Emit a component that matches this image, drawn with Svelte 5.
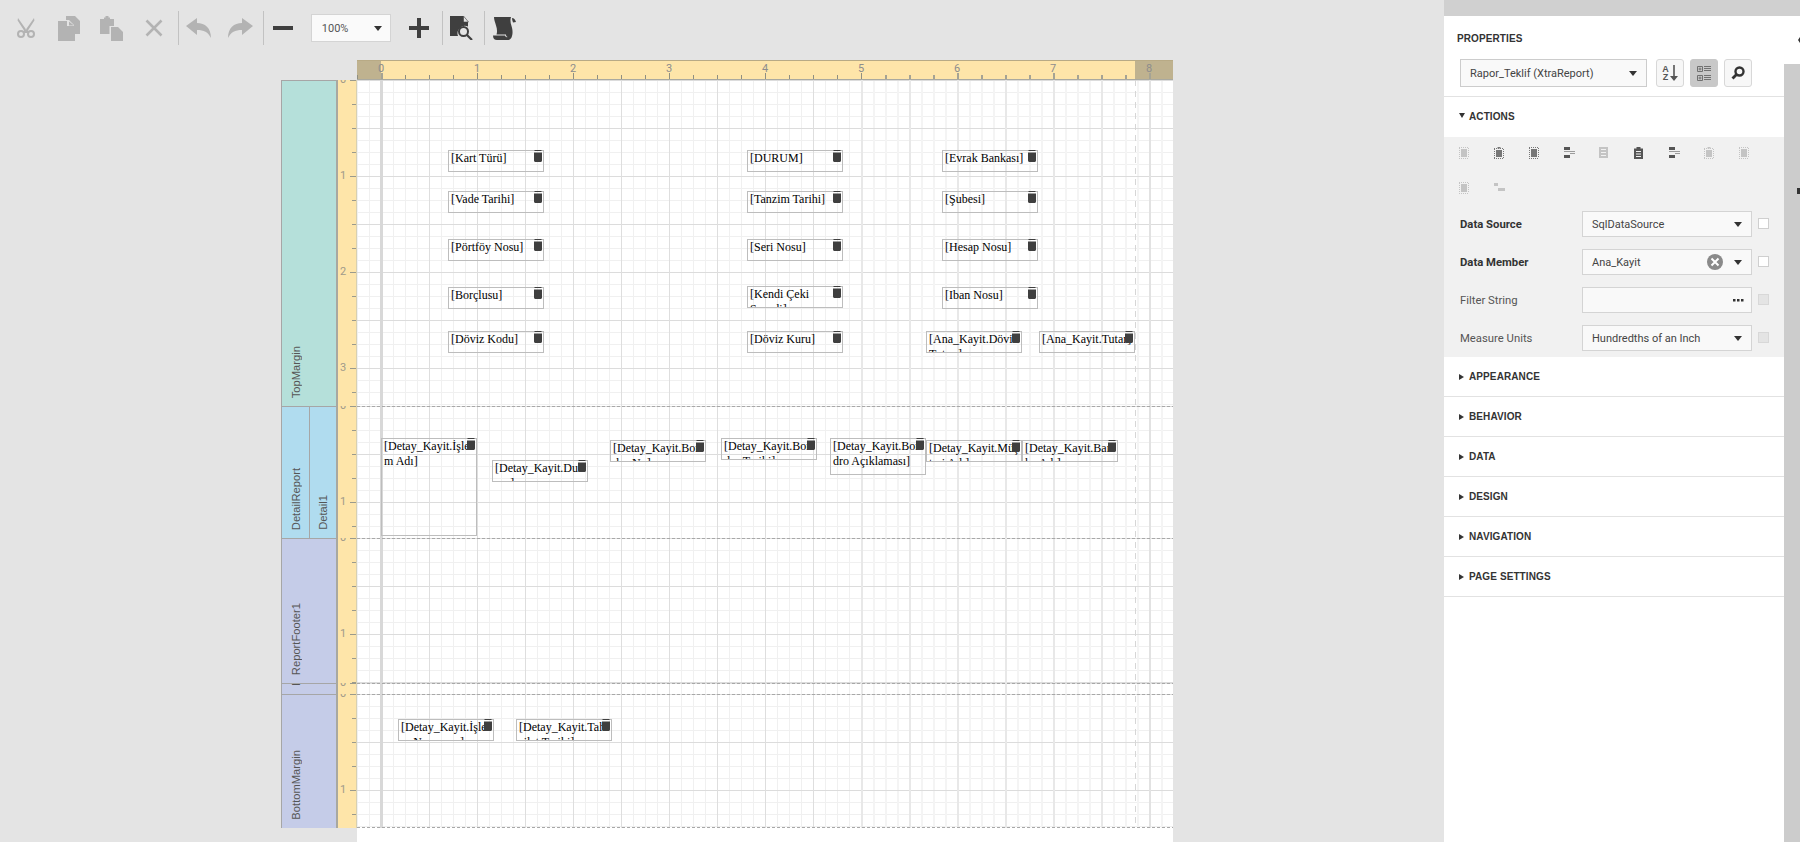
<script lang="ts">
  const bands = [
    { key: 'top', h: 326, color: 'teal', labels: ['TopMargin'] },
    { key: 'detail', h: 132, color: 'blue', labels: ['DetailReport', 'Detail1'] },
    { key: 'footer', h: 145, color: 'lilac', labels: ['ReportFooter1'] },
    { key: 'sliver', h: 11, color: 'lilac', labels: ['I'] },
    { key: 'bottom', h: 134, color: 'lilac', labels: ['BottomMargin'] },
  ];

  // x is relative to the page canvas, y to the band the control sits in
  const controls: Record<string, { x: number; y: number; h?: number; t: string }[]> = {
    top: [
      { x: 91, y: 70, t: '[Kart Türü]' },
      { x: 91, y: 111, t: '[Vade Tarihi]' },
      { x: 91, y: 159, t: '[Pörtföy Nosu]' },
      { x: 91, y: 207, t: '[Borçlusu]' },
      { x: 91, y: 251, t: '[Döviz Kodu]' },
      { x: 390, y: 70, t: '[DURUM]' },
      { x: 390, y: 111, t: '[Tanzim Tarihi]' },
      { x: 390, y: 159, t: '[Seri Nosu]' },
      { x: 390, y: 206, t: '[Kendi Çeki Senedi]' },
      { x: 390, y: 251, t: '[Döviz Kuru]' },
      { x: 585, y: 70, t: '[Evrak Bankası]' },
      { x: 585, y: 111, t: '[Şubesi]' },
      { x: 585, y: 159, t: '[Hesap Nosu]' },
      { x: 585, y: 207, t: '[Iban Nosu]' },
      { x: 569, y: 251, t: '[Ana_Kayit.Döviz Tutarı]' },
      { x: 682, y: 251, t: '[Ana_Kayit.Tutar]' },
    ],
    detail: [
      { x: 24, y: 32, h: 98, t: '[Detay_Kayit.İşlem Adı]' },
      { x: 135, y: 54, t: '[Detay_Kayit.Durum]' },
      { x: 253, y: 34, t: '[Detay_Kayit.Bordro No]' },
      { x: 364, y: 32, t: '[Detay_Kayit.Bordro Tarihi]' },
      { x: 473, y: 32, h: 37, t: '[Detay_Kayit.Bordro Açıklaması]' },
      { x: 569, y: 34, t: '[Detay_Kayit.Müşteri Adı]' },
      { x: 665, y: 34, t: '[Detay_Kayit.Banka Adı]' },
    ],
    footer: [],
    sliver: [],
    bottom: [
      { x: 41, y: 25, t: '[Detay_Kayit.İşlem Numarası]' },
      { x: 159, y: 25, t: '[Detay_Kayit.Tahsilat Tarihi]' },
    ],
  };

  const inches = [0, 1, 2, 3, 4, 5, 6, 7, 8];
  const quarterTicks = Array.from({ length: 34 }, (_, i) => i * 24);

  function bandTicks(h: number) {
    const out: number[] = [];
    for (let y = 0; y < h; y += 24) out.push(y);
    return out;
  }

  const actionIcons = [
    { k: 'frame', c: 'off' }, { k: 'clip', c: 'mid' }, { k: 'frame', c: 'mid' },
    { k: 'align', c: 'on' }, { k: 'list', c: 'off' }, { k: 'board', c: 'on' },
    { k: 'align', c: 'on' }, { k: 'clip', c: 'off' }, { k: 'frame', c: 'off' },
    { k: 'frame', c: 'off' }, { k: 'alignb', c: 'off' },
  ];

  const sections = ['APPEARANCE', 'BEHAVIOR', 'DATA', 'DESIGN', 'NAVIGATION', 'PAGE SETTINGS'];
</script>

{#snippet caret()}
  <svg class="caret" width="8" height="5" viewBox="0 0 8 5"><path d="M0 0h8L4 5z" /></svg>
{/snippet}

<div class="page">
  <div class="main">
    <div class="toolbar">
      <button class="tb off" title="Cut">
        <svg width="22" height="22" viewBox="0 0 22 22">
          <path d="M3 1l8.800 12.400-1.600 1.800L2.600 3.600zM19 1l-8.800 12.400 1.600 1.800 7.600-11.600z" />
          <path d="M8 14.500l2-1.500 2 0 2 1.500-1 1.500h-4z" />
          <circle cx="6" cy="17" r="3" fill="none" stroke="#b3b3b3" stroke-width="2" />
          <circle cx="16" cy="17" r="3" fill="none" stroke="#b3b3b3" stroke-width="2" />
        </svg>
      </button>
      <button class="tb off" title="Copy">
        <svg width="23" height="25" viewBox="0 0 23 25">
          <path d="M8 0h9l5 5v13h-6V9l-5-5H8z" />
          <path d="M0 5h9v5h5 3v15H0zM11 5.500l5 4h-5z" />
        </svg>
      </button>
      <button class="tb off" title="Paste">
        <svg width="23" height="25" viewBox="0 0 23 25">
          <path d="M0 3h4V1.500h1.500V0h3v1.500H10V3h4v7h-4.500v8H0z" />
          <path d="M11 11h7l5 5v9H11zM18.500 11.500l4 4h-4z" />
        </svg>
      </button>
      <button class="tb off" title="Delete">
        <svg width="18" height="18" viewBox="0 0 18 18"><path d="M1.500 1.500l15 15M16.500 1.500l-15 15" fill="none" stroke="#b3b3b3" stroke-width="2.600" /></svg>
      </button>
      <span class="sep first"></span>
      <button class="tb off" title="Undo">
        <svg width="25" height="20" viewBox="0 0 25 20"><path d="M0 8L11 0v5c8 0 14 5 14 15-3-6-7-8-14-8v5z" /></svg>
      </button>
      <button class="tb off" title="Redo">
        <svg width="25" height="20" viewBox="0 0 25 20"><path d="M25 8L14 0v5C6 5 0 10 0 20c3-6 7-8 14-8v5z" /></svg>
      </button>
      <span class="sep"></span>
      <button class="tb" title="Zoom out">
        <svg width="20" height="4" viewBox="0 0 20 4"><path d="M0 0h20v4H0z" /></svg>
      </button>
      <div class="zoom"><span>100%</span>{@render caret()}</div>
      <button class="tb plus" title="Zoom in">
        <svg width="20" height="20" viewBox="0 0 20 20"><path d="M8 0h4v8h8v4h-8v8H8v-8H0V8h8z" /></svg>
      </button>
      <span class="sep"></span>
      <button class="tb" title="Preview">
        <svg width="24" height="24" viewBox="0 0 24 24">
          <path d="M0 0h13l5 6v4.500a7.500 7.500 0 0 0-10 9.500H0z" />
          <path d="M13.500 0l5 6h-5z" fill="#e4e4e4" stroke="#3f3f3f" stroke-width=".6" />
          <circle cx="13.500" cy="15.500" r="4.500" fill="none" stroke="#3f3f3f" stroke-width="2" />
          <path d="M17 19l5 5" stroke="#3f3f3f" stroke-width="2.200" fill="none" />
        </svg>
      </button>
      <span class="sep"></span>
      <button class="tb" title="Scripts">
        <svg width="23" height="23" viewBox="0 0 23 23">
          <path d="M1 0h17c-1 3-.500 6 .500 9 1 3 1.500 7 .500 10-.500 2-1.500 3.500-3.500 4H4c-2.500 0-4-1.500-4-4.500h12c.500 1.500 1.500 2 2.500 1.500-1-.500-1.500-1-1.500-2.500H3.500c1-3 .500-6-.500-9C2 5 1 3 1 0z" />
          <path d="M19 1c2 0 3 1.500 4 4l-3 .500c-.500-1.500-1-3-1-4.500z" />
        </svg>
      </button>
    </div>

    <div class="surface">
      <div class="hruler">
        <div class="margin left"></div>
        <div class="margin right"></div>
        {#each quarterTicks as x, i}
          <i class="htick" class:inch={i % 4 === 1} class:wide={x > 504 || i === 1} style:left="{x}px"></i>
        {/each}
        {#each inches as n}
          <span class="hnum" style:left="{24 + n * 96}px">{n}</span>
        {/each}
      </div>

      {#each bands as band}
        <div class="band" style:height="{band.h}px">
          <div class="labels {band.color}">
            {#each band.labels as label}
              <div class="label"><span>{label}</span></div>
            {/each}
          </div>
          <div class="vruler">
            {#each bandTicks(band.h) as y, i}
              <i class="vtick" class:inch={i % 4 === 0} style:top="{y}px"></i>
              {#if i % 4 === 0}<span class="vnum" style:top="{y}px">{i / 4}</span>{/if}
            {/each}
          </div>
          <div class="grid" class:dashed={band.key !== 'top'} class:last={band.key === 'bottom'}>
            {#each controls[band.key] as c}
              <div class="ctl" style:left="{c.x}px" style:top="{c.y}px" style:height={c.h ? `${c.h}px` : null}>
                <div class="ctl-text">{c.t}</div>
                <svg class="db" width="8" height="12" viewBox="0 0 8 12">
                  <path d="M1 0h6l1 1H0z" />
                  <path d="M0 2.500h8V10.500c0 1-1 1.500-2 1.500H2c-1 0-2-.5-2-1.500z" />
                </svg>
              </div>
            {/each}
          </div>
        </div>
      {/each}
      <div class="page-edge"></div>
      <div class="paper-end"></div>
    </div>
  </div>

  <aside class="panel">
    <div class="panel-top"></div>
    <div class="panel-body">
      <div class="props">
        <div class="head">
          <div class="title">PROPERTIES</div>
          <div class="picker">
            <div class="pick"><span>Rapor_Teklif (XtraReport)</span>{@render caret()}</div>
            <button class="ib">
              <span class="az"><b>A</b><b>Z</b></span>
              <svg width="8" height="16" viewBox="0 0 8 16"><path d="M3.200 0h1.600v11H8l-4 5-4-5h3.200z" /></svg>
            </button>
            <button class="ib active">
              <svg width="14" height="15" viewBox="0 0 14 15" fill="none" stroke="#707070">
                <path d="M.5.500h5v5h-5zM.5 9.500h5v5h-5zM1.500 3h3M3 1.500v3M1.500 12h3M3 10.500v3M7 .5h7M7 2.500h7M7 4.500h7M7 9.500h7M7 11.500h7M7 13.500h7" />
              </svg>
            </button>
            <button class="ib">
              <svg width="14" height="14" viewBox="0 0 14 14">
                <circle cx="8.500" cy="5.500" r="4" fill="none" stroke="#333" stroke-width="2.400" />
                <path d="M5.500 8.500L1.500 12.500" stroke="#333" stroke-width="2.800" />
              </svg>
            </button>
          </div>
        </div>

        <div class="sec open"><span class="tri down"></span>ACTIONS</div>
        <div class="actions">
          <div class="icons">
            {#each actionIcons as ic}
              <div class="aicon {ic.c}">
                {#if ic.k === 'frame'}
                  <svg width="10" height="12" viewBox="0 0 10 12"><path d="M2 2h6v8H2z" /><path d="M0 .5h10M0 11.500h10M.5 1v10M9.500 1v10" fill="none" stroke="currentColor" stroke-dasharray="1 1" /></svg>
                {:else if ic.k === 'clip'}
                  <svg width="10" height="12" viewBox="0 0 10 12"><path d="M2 3h6v7H2zM3.500 0h3v1.500h-3z" /><path d="M0 1.500h10M0 11.500h10M.5 2v9M9.500 2v9" fill="none" stroke="currentColor" stroke-dasharray="1 1" /></svg>
                {:else if ic.k === 'list'}
                  <svg width="9" height="11" viewBox="0 0 9 11"><path d="M0 0h9v11H0zM2 2v1h5V2zM2 5v1h5V5zM2 8v1h5V8z" fill-rule="evenodd" /></svg>
                {:else if ic.k === 'board'}
                  <svg width="9" height="12" viewBox="0 0 9 12"><path d="M0 1.500h2.500V0h4v1.500H9V12H0zM2 4v1h5V4zM2 6.500v1h5v-1zM2 9v1h5V9z" fill-rule="evenodd" /></svg>
                {:else if ic.k === 'align'}
                  <svg width="11" height="11" viewBox="0 0 11 11"><path d="M0 0h6v3H0zM0 8h6v3H0z" /><path d="M0 4h11v1H0zM6 6h5v1H6z" opacity=".55" /></svg>
                {:else}
                  <svg width="11" height="11" viewBox="0 0 11 11"><path d="M0 1h4v3H0z" /><path d="M4 6h7v3H4z" /></svg>
                {/if}
              </div>
            {/each}
          </div>

          <div class="row">
            <label class="strong">Data Source</label>
            <div class="field"><span>SqlDataSource</span>{@render caret()}</div>
            <span class="chk"></span>
          </div>
          <div class="row">
            <label class="strong">Data Member</label>
            <div class="field">
              <span>Ana_Kayit</span>
              <svg class="clear" width="16" height="16" viewBox="0 0 16 16"><circle cx="8" cy="8" r="8" fill="#8a8a8a" /><path d="M4.500 4.500l7 7M11.500 4.500l-7 7" stroke="#fff" stroke-width="2" /></svg>
              {@render caret()}
            </div>
            <span class="chk"></span>
          </div>
          <div class="row">
            <label>Filter String</label>
            <div class="field">
              <span></span>
              <svg class="dots" width="11" height="3" viewBox="0 0 11 3"><path d="M0 0h2.500v2.500H0zM4 0h2.500v2.500H4zM8 0h2.500v2.500H8z" /></svg>
            </div>
            <span class="chk dim"></span>
          </div>
          <div class="row">
            <label>Measure Units</label>
            <div class="field"><span>Hundredths of an Inch</span>{@render caret()}</div>
            <span class="chk dim"></span>
          </div>
        </div>

        {#each sections as s}
          <div class="sec"><span class="tri"></span>{s}</div>
        {/each}
      </div>
      <div class="gutter-col">
        <div class="collapse"><span></span></div>
        <div class="gutter"><i></i></div>
      </div>
    </div>
  </aside>
</div>

<style>
  :global(body) {
    margin: 0;
  }
  .page {
    display: flex;
    width: 1800px;
    height: 842px;
    overflow: hidden;
    background: #e4e4e4;
    font-family: Roboto, 'Liberation Sans', sans-serif;
    color: #333;
  }
  .main {
    width: 1444px;
    flex: none;
  }

  /* toolbar */
  .toolbar {
    display: flex;
    align-items: center;
    height: 56px;
    padding: 0 0 0 5px;
    box-sizing: border-box;
  }
  .tb {
    display: flex;
    align-items: center;
    justify-content: center;
    width: 42.700px;
    height: 40px;
    flex: none;
    padding: 0;
    border: 0;
    background: none;
    fill: #3f3f3f;
  }
  .tb.off {
    fill: #b3b3b3;
  }
  .tb.plus {
    margin-left: 7px;
  }
  .sep {
    width: 1px;
    height: 34px;
    flex: none;
    margin: 0 -2px 0 1px;
    background: #c2c2c2;
  }
  .sep.first {
    margin-left: 2px;
  }
  .zoom {
    display: flex;
    align-items: center;
    justify-content: space-between;
    box-sizing: border-box;
    width: 80px;
    height: 28px;
    flex: none;
    margin-left: 6px;
    padding: 0 8px 0 10px;
    background: #fafafa;
    border: 1px solid #d4d4d4;
    font-size: 11px;
    color: #555;
  }
  .caret {
    flex: none;
    fill: #333;
  }

  /* design surface */
  .surface {
    position: relative;
    width: 892px;
    margin: 4px 0 0 281px;
    padding-bottom: 14px;
  }
  .hruler {
    position: relative;
    width: 816px;
    height: 20px;
    margin-left: 76px;
    box-sizing: border-box;
    overflow: hidden;
    background: #fee5a9;
    border-top: 1px solid #b8aa85;
    border-bottom: 1px solid #a9a9a0;
  }
  .margin {
    position: absolute;
    top: 0;
    bottom: 0;
    background: #bfb28f;
  }
  .margin.left {
    left: 0;
    width: 24px;
  }
  .margin.right {
    right: 0;
    width: 38px;
  }
  .htick {
    position: absolute;
    bottom: 0;
    width: 1px;
    height: 4px;
    background: #8f8f82;
  }
  .htick.wide {
    width: 2px;
    background: #a5a394;
  }
  .htick.inch {
    height: 6px;
  }
  .hnum {
    position: absolute;
    top: 1px;
    transform: translateX(-50%);
    font-size: 11px;
    line-height: 14px;
    color: #8d8d8d;
  }
  .band {
    display: flex;
  }
  .labels {
    display: flex;
    width: 55px;
    flex: none;
    box-sizing: border-box;
    border: 1px solid #a6a6a6;
    border-width: 1px 0 0 1px;
    overflow: hidden;
  }
  .teal {
    background: #b5e0da;
  }
  .blue {
    background: #b0dcef;
  }
  .lilac {
    background: #c5cce8;
  }
  .label {
    flex: 0 0 27px;
    display: flex;
    align-items: flex-end;
    justify-content: center;
    padding-bottom: 8px;
    box-sizing: border-box;
    overflow: hidden;
  }
  .label + .label {
    flex: 1;
    border-left: 1px solid #a6a6a6;
  }
  .label span {
    writing-mode: vertical-rl;
    transform: rotate(180deg);
    font-family: 'Liberation Sans', sans-serif;
    font-size: 11.200px;
    line-height: 14px;
    color: #555;
    white-space: nowrap;
  }
  .vruler {
    position: relative;
    width: 21px;
    flex: none;
    box-sizing: border-box;
    overflow: hidden;
    background: #fee5a9;
    border-left: 2px solid #a8a8a0;
    border-right: 1px solid #d8d0b0;
  }
  .vtick {
    position: absolute;
    right: 0;
    width: 4px;
    height: 1px;
    background: #9a9a8c;
  }
  .vtick.inch {
    width: 6px;
  }
  .vnum {
    position: absolute;
    left: 2px;
    transform: translateY(-50%);
    font-size: 11px;
    line-height: 14px;
    color: #a09a8a;
  }
  .grid {
    position: relative;
    width: 816px;
    flex: none;
    background-color: #fff;
    background-image:
      linear-gradient(#d8d8d8, #d8d8d8),
      linear-gradient(to right, #dedede 1px, transparent 1px),
      linear-gradient(to bottom, #dcdcdc 1px, transparent 1px),
      linear-gradient(to right, #f0f0f0 1px, transparent 1px),
      linear-gradient(to bottom, #f0f0f0 1px, transparent 1px);
    background-size:
      3px 100%,
      48px 48px,
      48px 48px,
      12px 12px,
      12px 12px;
    background-position:
      23px 0,
      24px 0,
      0 0,
      0 0,
      0 0;
    background-repeat: no-repeat, repeat, repeat, repeat, repeat;
  }
  /* right part of the canvas: the lines land between pixels there */
  .grid::before {
    content: '';
    position: absolute;
    inset: 0 0 0 504px;
    background-color: #fff;
    background-image:
      linear-gradient(#e2e2e2, #e2e2e2),
      linear-gradient(to right, #e8e8e8 2px, transparent 2px),
      linear-gradient(to bottom, #dcdcdc 1px, transparent 1px),
      linear-gradient(to right, #f4f4f4 2px, transparent 2px),
      linear-gradient(to bottom, #f0f0f0 1px, transparent 1px);
    background-size:
      2px 100%,
      48px 48px,
      48px 48px,
      12px 12px,
      12px 12px;
    background-position:
      288px 0,
      0 0,
      0 0,
      0 0,
      0 0;
    background-repeat: no-repeat, repeat, repeat, repeat, repeat;
  }
  .grid.dashed::after {
    content: '';
    position: absolute;
    inset: 0;
    background: repeating-linear-gradient(to right, #a8a8a8 0 3px, transparent 3px 5px) 0 0 / 100% 1px no-repeat;
  }
  .grid.dashed.last::after {
    background:
      repeating-linear-gradient(to right, #a8a8a8 0 3px, transparent 3px 5px) 0 0 / 100% 1px no-repeat,
      repeating-linear-gradient(to right, #a8a8a8 0 3px, transparent 3px 5px) 0 100% / 100% 1px no-repeat;
  }
  .page-edge {
    position: absolute;
    left: 854px;
    top: 20px;
    width: 1px;
    height: 748px;
    background: repeating-linear-gradient(to bottom, #d6d6d6 0 6px, transparent 6px 11px);
  }
  .paper-end {
    position: absolute;
    left: 76px;
    width: 816px;
    bottom: 0;
    height: 14px;
    background: #fff;
  }
  .ctl {
    position: absolute;
    z-index: 1;
    box-sizing: border-box;
    width: 96px;
    height: 22px;
    border: 1px solid #bdbdbd;
  }
  .ctl-text {
    height: 100%;
    padding: 0 2px;
    overflow: hidden;
    overflow-wrap: break-word;
    font-family: 'Liberation Serif', serif;
    font-size: 12px;
    line-height: 15.300px;
    color: #000;
  }
  .db {
    position: absolute;
    top: -1px;
    right: 1px;
    fill: #3f3f3f;
  }

  /* properties panel */
  .panel {
    width: 356px;
    flex: none;
  }
  .panel-top {
    height: 16px;
    background: #d0d0d0;
  }
  .panel-body {
    display: flex;
    height: 826px;
    background: #fff;
  }
  .props {
    width: 340px;
    flex: none;
  }
  .head {
    height: 81px;
    padding: 0 16px;
    box-sizing: border-box;
    border-bottom: 1px solid #e2e2e2;
  }
  .title {
    padding: 16px 0 0;
    margin-left: -3px;
    height: 28px;
    box-sizing: border-box;
    font-family: 'Liberation Sans', sans-serif;
    font-size: 10px;
    line-height: 14px;
    font-weight: 700;
    color: #333;
    letter-spacing: 0.1px;
  }
  .picker {
    display: flex;
    margin-top: 15px;
  }
  .pick {
    display: flex;
    align-items: center;
    justify-content: space-between;
    box-sizing: border-box;
    width: 187px;
    height: 28px;
    padding: 0 9px;
    background: #f9f9f9;
    border: 1px solid #ccc;
    font-size: 11px;
    color: #444;
  }
  .ib {
    display: flex;
    align-items: center;
    justify-content: center;
    gap: 1px;
    box-sizing: border-box;
    width: 28px;
    height: 28px;
    margin-left: 6px;
    padding: 0;
    background: #f7f7f7;
    border: 1px solid #d8d8d8;
    border-radius: 3px;
    fill: #555;
  }
  .ib:first-of-type {
    margin-left: 9px;
  }
  .ib.active {
    background: #c8c8c8;
    border-color: #c8c8c8;
  }
  .az {
    display: flex;
    flex-direction: column;
    font-size: 9px;
    line-height: 8px;
    color: #555;
  }
  .sec {
    display: flex;
    align-items: center;
    height: 40px;
    box-sizing: border-box;
    padding-left: 15px;
    border-bottom: 1px solid #e2e2e2;
    font-family: 'Liberation Sans', sans-serif;
    font-size: 10px;
    font-weight: 700;
    color: #333;
    letter-spacing: 0.1px;
  }
  .sec.open {
    padding-bottom: 2px;
    border-bottom: 0;
  }
  .tri {
    width: 0;
    height: 0;
    margin-right: 5px;
    border: 3px solid transparent;
    border-left: 5px solid #333;
    border-right: 0;
  }
  .tri.down {
    margin: -2px 4px 0 0;
    border: 3px solid transparent;
    border-top: 5px solid #333;
    border-bottom: 0;
  }
  .actions {
    height: 220px;
    box-sizing: border-box;
    background: #f1f1f1;
  }
  .icons {
    display: flex;
    flex-wrap: wrap;
    align-content: flex-start;
    row-gap: 4px;
    width: 340px;
    height: 68px;
    padding-left: 15px;
    box-sizing: border-box;
  }
  .aicon {
    width: 35px;
    height: 31px;
    display: flex;
    align-items: center;
    justify-content: flex-start;
    color: #777;
    fill: #777;
  }
  .aicon.off {
    color: #c4c4c4;
    fill: #c4c4c4;
  }
  .aicon.on {
    color: #555;
    fill: #555;
  }
  .row {
    display: flex;
    align-items: center;
    height: 38px;
    padding-left: 16px;
  }
  .row label {
    width: 122px;
    font-size: 11.300px;
    color: #555;
  }
  .row label.strong {
    font-weight: 700;
    color: #333;
  }
  .field {
    display: flex;
    align-items: center;
    box-sizing: border-box;
    width: 170px;
    height: 26px;
    padding: 0 9px;
    background: #f9f9f9;
    border: 1px solid #d4d4d4;
    font-size: 11px;
    color: #444;
  }
  .field span {
    flex: 1;
    padding-top: 1px;
  }
  .clear {
    margin-right: 11px;
  }
  .dots {
    margin-right: -2px;
    fill: #333;
  }
  .chk {
    width: 9px;
    height: 9px;
    margin: -2px 0 0 6px;
    background: #fff;
    border: 1px solid #cfcfcf;
  }
  .chk.dim {
    background: #e4e4e4;
    border-color: #d8d8d8;
  }
  .gutter-col {
    display: flex;
    flex-direction: column;
    flex: 1;
  }
  .collapse {
    position: relative;
    height: 48px;
  }
  .collapse span {
    position: absolute;
    right: 0;
    top: 21px;
    border: 3px solid transparent;
    border-right: 2px solid #333;
    border-left: 0;
  }
  .gutter {
    position: relative;
    flex: 1;
    background: #ccc;
  }
  .gutter i {
    position: absolute;
    right: 0;
    top: 124px;
    width: 3px;
    height: 6px;
    background: #333;
  }
</style>
